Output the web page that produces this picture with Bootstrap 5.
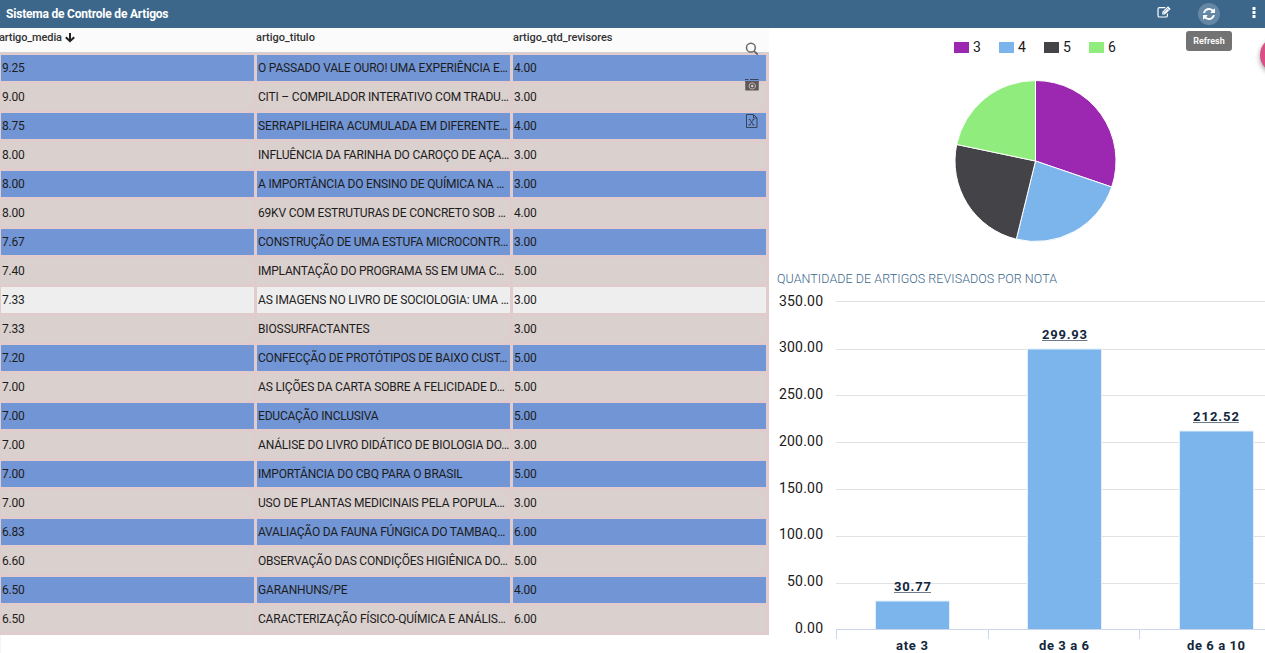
<!DOCTYPE html>
<html lang="pt-BR">
<head>
<meta charset="utf-8">
<meta name="viewport" content="width=device-width, initial-scale=1">
<title>Sistema de Controle de Artigos</title>
<link href="https://cdn.jsdelivr.net/npm/bootstrap@5.3.0/dist/css/bootstrap.min.css" rel="stylesheet">
<style>
body{font-family:Roboto,sans-serif;background:#fff;color:#222;height:653px}
.topbar{height:28px;background:#3c678b;color:#fff}
.topbar h1{font-size:12px;font-weight:700;line-height:28px;padding-left:6px;letter-spacing:-.2px}
.tool{width:22px;height:22px}
.tool svg,.side-tools svg{display:block}
.refresh{background:#6487a5;margin-left:23px;margin-right:28px;position:relative}
.tip{position:absolute;top:28px;left:50%;transform:translateX(-50%);width:46px;height:20px;background:#737373;border-radius:3px;font-size:9px;line-height:20px;font-weight:600;text-align:center}
.grid-panel{width:769px;height:625px;border-left:1px solid #f5f5f5}
.grid-table{background:#e0cccd;margin-left:-1px;padding-bottom:3px}
.grid-head,.grid-line{display:grid;grid-template-columns:253px 253px 253px;column-gap:3px;padding-left:1px}
.grid-head{height:25px;background:#fbfbfb;border-bottom:1px solid #d5d0d0;font-size:11px;font-weight:500;line-height:19px;color:#333;margin-bottom:2px}
.grid-head span{margin-left:-1px;white-space:nowrap;letter-spacing:-.03px}
.grid-head span:first-child{margin-left:-2px;letter-spacing:-.12px}
.grid-head span:last-child{margin-left:0}
.grid-line{height:26px;line-height:26px;font-size:12px;margin-bottom:3px;color:#1d1d1d}
.grid-line:last-child{margin-bottom:0}
.grid-line span{background:#dad0ce;padding-left:1px;white-space:nowrap;letter-spacing:-.2px}
.grid-line:nth-child(even) span{background:#7295d5}
.grid-line.hovered span{background:#eee}
.side-tools{position:absolute;left:744px;top:14px;gap:22px;opacity:.62}
.charts{width:496px}
.fab{position:absolute;left:1260px;top:37px;width:36px;height:36px;background:#d94f86;box-shadow:0 2px 5px rgba(0,0,0,.4)}
.legend-y text{font-size:14px;fill:#1a1a1a}
.bold-label{font-size:13px;font-weight:700;fill:#12263c}
</style>
</head>
<body class="overflow-hidden position-relative">
<header class="topbar d-flex align-items-center">
  <h1 class="m-0 me-auto">Sistema de Controle de Artigos</h1>
  <div class="tool d-flex align-items-center justify-content-center pb-1">
    <svg width="14" height="12" viewBox="0 0 14 12" fill="none" stroke="#fff" stroke-width="1.2"><path d="M8.300 1.600H2.600Q1 1.600 1 3.200V9.400Q1 11 2.600 11H8.800Q10.400 11 10.400 9.400V7.400"/><path d="M5.200 8.600V6.100L11 .3 13.700 2.900 7.800 8.600Z" fill="#fff" stroke="none"/><path d="M6.800 6.400 10.600 2.600M9.700 1.900 12 4.200M6 6.700 7.200 7.900" stroke="#3c678b" stroke-width=".6"/></svg>
  </div>
  <div class="tool refresh rounded-circle d-flex align-items-center justify-content-center">
    <svg width="12" height="12" viewBox="0 0 1536 1536" fill="#fff"><path d="M1511 928q0 5-1 7-64 268-268 434.500T764 1536q-146 0-282.500-55T238 1324l-129 129q-19 19-45 19t-45-19-19-45V960q0-26 19-45t45-19h448q26 0 45 19t19 45-19 45l-137 137q71 66 161 102t187 36q134 0 250-65t186-179q11-17 53-117 8-23 30-23h192q13 0 22.500 9.500t9.500 22.500zm25-800v448q0 26-19 45t-45 19h-448q-26 0-45-19t-19-45 19-45l138-138Q969 256 768 256q-134 0-250 65T332 500q-11 17-53 117-8 23-30 23H50q-13 0-22.500-9.500T18 608v-7q65-268 270-434.500T768 0q146 0 284 55.500T1297 212l130-129q19-19 45-19t45 19 19 45z"/></svg>
    <div class="tip">Refresh</div>
  </div>
  <div class="d-flex flex-shrink-0 pb-1" style="width:17px">
    <svg width="12" height="14" viewBox="0 0 12 14" fill="#fff"><rect x="4.500" y="2" width="3" height="3" rx=".6"/><rect x="4.500" y="6" width="3" height="3" rx=".6"/><rect x="4.500" y="10" width="3" height="3" rx=".6"/></svg>
  </div>
</header>
<main class="d-flex">
  <section class="grid-panel position-relative">
    <div class="grid-table">
      <div class="grid-head"><span>artigo_media <svg width="10" height="10" viewBox="0 0 10 10" fill="none" stroke="#222" stroke-width="2"><path d="M5 0V8M.8 4.200 5 8.200 9.200 4.200"/></svg></span><span>artigo_titulo</span><span>artigo_qtd_revisores</span></div>
      <div class="grid-line"><span>9.25</span><span data-width="249.500">O PASSADO VALE OURO! UMA EXPERIÊNCIA E…</span><span>4.00</span></div>
      <div class="grid-line"><span>9.00</span><span data-width="250.500">CITI – COMPILADOR INTERATIVO COM TRADU…</span><span>3.00</span></div>
      <div class="grid-line"><span>8.75</span><span data-width="249.500">SERRAPILHEIRA ACUMULADA EM DIFERENTE…</span><span>4.00</span></div>
      <div class="grid-line"><span>8.00</span><span data-width="251">INFLUÊNCIA DA FARINHA DO CAROÇO DE AÇA…</span><span>3.00</span></div>
      <div class="grid-line"><span>8.00</span><span data-width="246">A IMPORTÂNCIA DO ENSINO DE QUÍMICA NA …</span><span>3.00</span></div>
      <div class="grid-line"><span>8.00</span><span data-width="247.500">69KV COM ESTRUTURAS DE CONCRETO SOB …</span><span>4.00</span></div>
      <div class="grid-line"><span>7.67</span><span data-width="250">CONSTRUÇÃO DE UMA ESTUFA MICROCONTR…</span><span>3.00</span></div>
      <div class="grid-line"><span>7.40</span><span data-width="246">IMPLANTAÇÃO DO PROGRAMA 5S EM UMA C…</span><span>5.00</span></div>
      <div class="grid-line hovered"><span>7.33</span><span data-width="250.500">AS IMAGENS NO LIVRO DE SOCIOLOGIA: UMA …</span><span>3.00</span></div>
      <div class="grid-line"><span>7.33</span><span data-width="111.500">BIOSSURFACTANTES</span><span>3.00</span></div>
      <div class="grid-line"><span>7.20</span><span data-width="249">CONFECÇÃO DE PROTÓTIPOS DE BAIXO CUST…</span><span>5.00</span></div>
      <div class="grid-line"><span>7.00</span><span data-width="246.500">AS LIÇÕES DA CARTA SOBRE A FELICIDADE D…</span><span>5.00</span></div>
      <div class="grid-line"><span>7.00</span><span data-width="120.500">EDUCAÇÃO INCLUSIVA</span><span>5.00</span></div>
      <div class="grid-line"><span>7.00</span><span data-width="251">ANÁLISE DO LIVRO DIDÁTICO DE BIOLOGIA DO…</span><span>3.00</span></div>
      <div class="grid-line"><span>7.00</span><span data-width="204.500">IMPORTÂNCIA DO CBQ PARA O BRASIL</span><span>5.00</span></div>
      <div class="grid-line"><span>7.00</span><span data-width="246.500">USO DE PLANTAS MEDICINAIS PELA POPULA…</span><span>3.00</span></div>
      <div class="grid-line"><span>6.83</span><span data-width="247">AVALIAÇÃO DA FAUNA FÚNGICA DO TAMBAQ…</span><span>6.00</span></div>
      <div class="grid-line"><span>6.60</span><span data-width="249.500">OBSERVAÇÃO DAS CONDIÇÕES HIGIÊNICA DO…</span><span>5.00</span></div>
      <div class="grid-line"><span>6.50</span><span data-width="89.500">GARANHUNS/PE</span><span>4.00</span></div>
      <div class="grid-line"><span>6.50</span><span data-width="247.500">CARACTERIZAÇÃO FÍSICO-QUÍMICA E ANÁLIS…</span><span>6.00</span></div>
    </div>
    <div class="side-tools d-flex flex-column">
      <svg width="14" height="14" viewBox="0 0 14 14" fill="none" stroke="#111" stroke-width="1.500"><circle cx="5.900" cy="5.700" r="4.400"/><path d="M9 8.900 12.700 12.600"/></svg>
      <svg width="14" height="14" viewBox="0 0 14 14" fill="none" stroke="#111"><path d="M1 3V12M13 3V12M0 1.500H3.500M5 1.500H13.500M0 3.500H14" /><path fill="#111" stroke="none" fill-rule="evenodd" d="M.5 4H13.500V12.500H.5ZM7.200 4.400a3.500 3.500 0 1 0 .01 0Z"/><circle cx="7.200" cy="7.900" r="2" stroke-width="1.500"/></svg>
      <svg width="14" height="14" viewBox="0 0 14 14" fill="none" stroke="#111"><path d="M1.500.5H8.500L12 4V13.500H1.500ZM8.500.5V4H12"/><path stroke-width=".9" d="M4.800 5.500 8.500 11M8.500 5.500 4.600 11M3.800 5.500H5.500M7.500 5.500H9.300M3.500 11H5.500M7.500 11H9.500"/></svg>
    </div>
  </section>
  <section class="charts">
    <svg class="d-block" width="496" height="625" viewBox="769 28 496 625" font-family="Roboto,sans-serif">
      <g class="legend-y">
        <rect x="954" y="42" width="15" height="11" fill="#9c27b0"/><text x="973" y="52">3</text>
        <rect x="999" y="42" width="15" height="11" fill="#7cb5ec"/><text x="1018" y="52">4</text>
        <rect x="1044" y="42" width="15" height="11" fill="#434348"/><text x="1063" y="52">5</text>
        <rect x="1089" y="42" width="15" height="11" fill="#90ed7d"/><text x="1108" y="52">6</text>
      </g>
      <g stroke="#fff" stroke-width="1" stroke-linejoin="round">
        <path fill="#9c27b0" d="M1035.500 161V80.500A80.500 80.500 0 0 1 1111.700 187Z"/>
        <path fill="#7cb5ec" d="M1035.500 161 1111.700 187A80.500 80.500 0 0 1 1016.300 239.200Z"/>
        <path fill="#434348" d="M1035.500 161 1016.300 239.200A80.500 80.500 0 0 1 956.700 144.500Z"/>
        <path fill="#90ed7d" d="M1035.500 161 956.700 144.500A80.500 80.500 0 0 1 1035.500 80.500Z"/>
      </g>
      <text x="777" y="283" font-size="12.500" font-weight="300" fill="#3c678b" textLength="280">QUANTIDADE DE ARTIGOS REVISADOS POR NOTA</text>
      <path stroke="#e2e2e2" d="M836 301.500H1265M836 349.500H1265M836 395.500H1265M836 442.500H1265M836 489.500H1265M836 536.500H1265M836 583.500H1265"/>
      <g class="legend-y">
        <text x="779" y="306" textLength="44">350.00</text><text x="779" y="352" textLength="44">300.00</text><text x="779" y="399" textLength="44">250.00</text><text x="779" y="446" textLength="44">200.00</text><text x="779" y="493" textLength="44">150.00</text><text x="779" y="539" textLength="44">100.00</text><text x="787" y="586" textLength="36">50.00</text><text x="795" y="633" textLength="28">0.00</text>
      </g>
      <g fill="#7cb5ec" stroke="#e4f0fb"><rect x="875.500" y="601" width="74" height="28.500"/><rect x="1027.500" y="349" width="74" height="280.500"/><rect x="1179.500" y="431" width="74" height="198.500"/></g>
      <path stroke="#ccd6eb" fill="none" d="M836 629.500H1265M836.500 629V639M988.500 629V639M1139.500 629V639"/>
      <g class="bold-label">
        <text x="894" y="591" textLength="37">30.77</text><text x="1042" y="339" textLength="45">299.93</text><text x="1193" y="421" textLength="46">212.52</text>
        <text x="896" y="650" textLength="32">ate 3</text><text x="1039" y="650" textLength="50">de 3 a 6</text><text x="1187" y="650" textLength="58">de 6 a 10</text>
      </g>
      <path stroke="#6c7a8b" d="M894 592.500H931M1042 340.500H1087.500M1193 422.500H1239"/>
    </svg>
  </section>
</main>
<div class="fab rounded-circle"></div>
<script src="https://cdn.jsdelivr.net/npm/bootstrap@5.3.0/dist/js/bootstrap.bundle.min.js"></script>
<script>
document.querySelectorAll('[data-width]').forEach(cell => {
  cell.style.letterSpacing = '0px';
  const range = document.createRange();
  range.selectNodeContents(cell);
  const natural = range.getBoundingClientRect().width;
  cell.style.letterSpacing = (cell.dataset.width - natural) / cell.textContent.length + 'px';
});
</script>
</body>
</html>
